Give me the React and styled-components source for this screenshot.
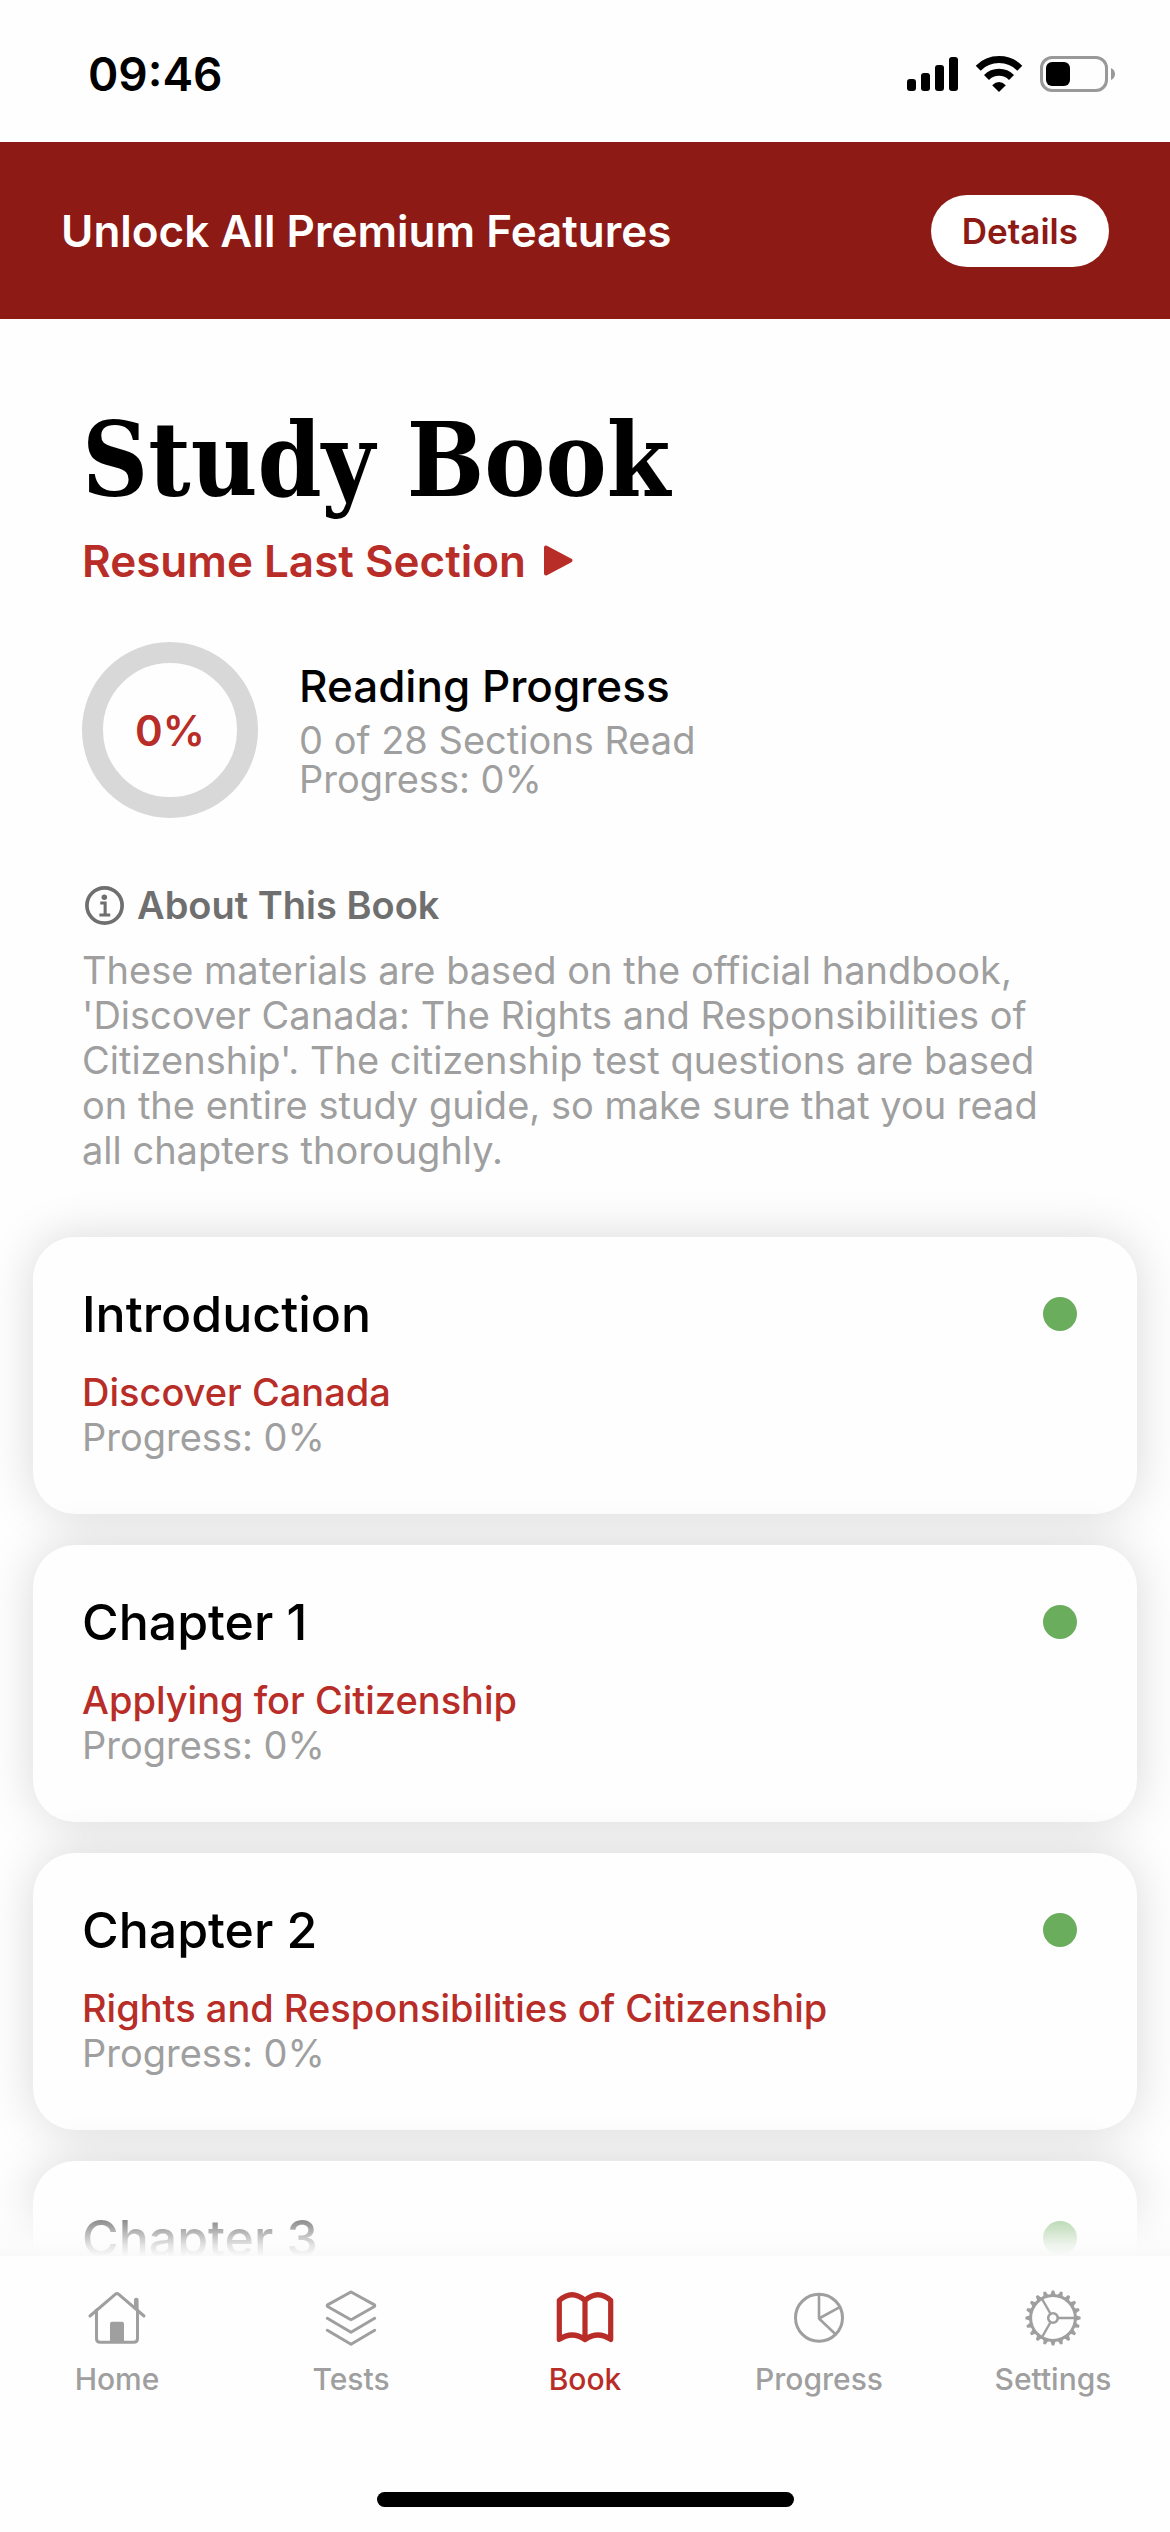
import React from "react";
import styled, { createGlobalStyle } from "styled-components";

const GlobalStyle = createGlobalStyle`
  * { box-sizing: border-box; }
  body {
    margin: 0;
    background: #fefefe;
    color: #000;
    font-family: Inter, Roboto, "Liberation Sans", sans-serif;
  }
  h1, h2, h3, p { margin: 0; }
  a { color: inherit; text-decoration: none; }
  svg { display: block; flex: none; overflow: visible; }
`;

const RED = "#b82d27";
const GREY = "#9f9f9f";

const Screen = styled.div`
  display: flex;
  flex-direction: column;
  height: 100vh;
  overflow: hidden;
`;

const StatusBar = styled.header`
  display: flex;
  flex: none;
  align-items: center;
  justify-content: space-between;
  height: 142px;
  padding: 6px 55px 0 88px;
`;

const Clock = styled.time`
  font-size: 46px;
  font-weight: 600;
`;

const StatusIcons = styled.div`
  display: flex;
  align-items: center;
  gap: 17px;
`;

const Banner = styled.section`
  display: flex;
  flex: none;
  align-items: center;
  justify-content: space-between;
  height: 177px;
  padding: 0 61px;
  background: #8d1a15;
  color: #fff;
`;

const BannerText = styled.p`
  font-size: 44px;
  font-weight: 600;
`;

const DetailsButton = styled.button`
  height: 72px;
  padding: 0 31px;
  border: 0;
  border-radius: 36px;
  background: #fff;
  color: #8d1a15;
  font: 600 35px Inter, Roboto, sans-serif;
`;

const Content = styled.main`
  position: relative;
  flex: 1;
  min-height: 0;
  overflow: hidden;
`;

const BottomFade = styled.div`
  position: absolute;
  right: 0;
  bottom: 0;
  left: 0;
  height: 72px;
  background: linear-gradient(
    rgba(254, 254, 254, 0),
    rgba(254, 254, 254, 0.55) 50%,
    rgba(252, 252, 252, 0.9) 85%,
    #f9f9f9
  );
`;

const Intro = styled.section`
  padding: 81px 82px 64px;
`;

const Title = styled.h1`
  font: bold 102px/120px "Roboto Slab", "DejaVu Serif Condensed", "DejaVu Serif", serif;
`;

const ResumeLink = styled.a`
  display: flex;
  align-items: center;
  gap: 17px;
  margin-top: 15px;
  color: ${RED};
  font-size: 44px;
  font-weight: 600;
  line-height: 52px;
`;

const Progress = styled.div`
  display: flex;
  align-items: center;
  gap: 41px;
  margin-top: 55px;
`;

const Ring = styled.div`
  display: grid;
  place-items: center;
  width: 176px;
  height: 176px;
  border: 21px solid #d8d8d8;
  border-radius: 50%;
  color: ${RED};
  font-size: 42px;
  font-weight: 600;
`;

const ProgressTitle = styled.h2`
  margin-bottom: 10px;
  font-size: 44px;
  font-weight: 500;
  line-height: 50px;
`;

const ProgressLine = styled.p`
  color: ${GREY};
  font-size: 38px;
  line-height: 39px;
`;

const AboutTitle = styled.h2`
  display: flex;
  align-items: center;
  gap: 12px;
  margin-top: 64px;
  color: #6f6f6f;
  font-size: 38px;
  font-weight: 600;
  line-height: 46px;
`;

const AboutText = styled.p`
  max-width: 980px;
  margin-top: 20px;
  color: ${GREY};
  font-size: 38px;
  line-height: 45px;
`;

const Chapters = styled.div`
  display: flex;
  flex-direction: column;
  gap: 31px;
  padding: 0 33px;
`;

const Card = styled.article`
  padding: 47px 60px 54px 49px;
  border-radius: 42px;
  background: #fefefe;
  box-shadow: 0 0 48px rgba(0, 0, 0, 0.15);
`;

const CardHead = styled.div`
  display: flex;
  align-items: center;
  justify-content: space-between;
  margin-bottom: 26px;
`;

const CardTitle = styled.h3`
  font-size: 50px;
  font-weight: 500;
  line-height: 60px;
`;

const Dot = styled.span`
  width: 34px;
  height: 34px;
  border-radius: 50%;
  background: #6aad5c;
`;

const CardLink = styled.a`
  display: block;
  color: ${RED};
  font-size: 38px;
  font-weight: 500;
  line-height: 45px;
`;

const CardProgress = styled.p`
  color: ${GREY};
  font-size: 38px;
  line-height: 45px;
`;

const Footer = styled.footer`
  display: flex;
  flex: none;
  flex-direction: column;
  align-items: center;
  justify-content: space-between;
  height: 276px;
  padding: 34px 0 25px;
  background: #fefefe;
`;

const Tabs = styled.nav`
  display: grid;
  grid-template-columns: repeat(5, 1fr);
  width: 100%;
`;

const Tab = styled.a`
  display: flex;
  flex-direction: column;
  align-items: center;
  gap: 15px;
  color: ${(p) => (p.$active ? RED : GREY)};
  font-size: 30px;
  font-weight: 500;
  line-height: 36px;
`;

const HomeIndicator = styled.div`
  width: 417px;
  height: 15px;
  border-radius: 8px;
  background: #000;
`;

const SignalIcon = () => (
  <svg width="51" height="34" aria-hidden="true">
    {[12, 18, 26, 34].map((h, i) => (
      <rect key={h} x={i * 14} y={34 - h} width="9" height={h} rx="3" />
    ))}
  </svg>
);

const WifiIcon = () => (
  <svg width="48" height="36" fill="none" stroke="#000" strokeWidth="7" aria-hidden="true">
    <path d="M3.2 12.2A29.5 29.5 0 0 1 44.8 12.2" />
    <path d="M11.5 21.5A17.5 17.5 0 0 1 36.5 21.5" />
    <path d="M24 36L17.2 29.2Q24 22.8 30.8 29.2Z" fill="#000" stroke="none" />
  </svg>
);

const BatteryIcon = () => (
  <svg width="75" height="36" aria-hidden="true">
    <rect x="1.5" y="1.5" width="65" height="33" rx="10.5" fill="none" stroke="#999" strokeWidth="3" />
    <rect x="6" y="6" width="24" height="24" rx="6" />
    <path d="M71 12Q75 14 75 18Q75 22 71 24Z" fill="#999" />
  </svg>
);

const PlayIcon = () => (
  <svg width="30" height="32" fill="currentColor" stroke="currentColor" strokeWidth="4" strokeLinejoin="round" aria-hidden="true">
    <path d="M3 2.5V28.5L27.5 15.5Z" />
  </svg>
);

const InfoIcon = () => (
  <svg width="43" height="39" viewBox="-3 0 42 38" fill="none" stroke="currentColor" strokeWidth="3.6" aria-hidden="true">
    <circle cx="19" cy="19" r="17.2" />
    <circle cx="18.8" cy="11" r="2.7" fill="currentColor" stroke="none" />
    <path d="M14.8 16.6H19.6V28M14 28.2H24.6" strokeWidth="3" />
  </svg>
);

const TabIcon = ({ width = 3, children }) => (
  <svg
    width="56"
    height="56"
    fill="none"
    stroke="currentColor"
    strokeWidth={width}
    strokeLinecap="round"
    strokeLinejoin="round"
    aria-hidden="true"
  >
    {children}
  </svg>
);

const HomeIcon = () => (
  <TabIcon>
    <path d="M1 26L26.5 4.2Q28 3 29.5 4.2L55 26" />
    <path d="M7.5 20V48.5Q7.5 52.3 11.3 52.3H44.7Q48.5 52.3 48.5 48.5V20" />
    <path d="M45 17V9.8Q45 7.8 47.2 7.8Q49.6 7.8 49.6 9.8V21Z" fill="currentColor" stroke="none" />
    <path d="M21 52V33.7Q21 31.7 23 31.7H33Q35 31.7 35 33.7V52Z" fill="currentColor" stroke="none" />
  </TabIcon>
);

const TestsIcon = () => (
  <TabIcon>
    <path d="M27 2.5Q28 1.8 29 2.5L51 14.6Q52.6 15.7 51 16.8L29 29.2Q28 30 27 29.2L5 16.8Q3.4 15.7 5 14.6Z" />
    <path d="M4.3 28.3L28 42.2L51.7 28.3M4.3 40.3L28 54.2L51.7 40.3" />
  </TabIcon>
);

const BookIcon = () => (
  <TabIcon width={5.2}>
    <path d="M28 10.5Q15 -1 2.3 10.5V49.5Q15 40.5 28 49.5Q41 40.5 53.7 49.5V10.5Q41 -1 28 10.5V49.5" />
  </TabIcon>
);

const ProgressIcon = () => (
  <TabIcon>
    <circle cx="28" cy="27.7" r="23.5" />
    <path d="M28 4.5V28.5L48.3 17.3M28 28.5L44.3 44" strokeWidth="2.6" />
  </TabIcon>
);

const SettingsIcon = () => (
  <TabIcon width={2.6}>
    <g transform="translate(28 28)">
      <circle r="22.4" strokeWidth="3" />
      <circle r="4.8" />
      {[0, 120, 240].map((a) => (
        <path key={a} d="M6 0H22" strokeWidth="2.3" transform={`rotate(${a})`} />
      ))}
      {Array.from({ length: 20 }, (_, i) => (
        <path key={i} d="M22.8 -2.7L27.6 -1.2V1.2L22.8 2.7Z" fill="currentColor" stroke="none" transform={`rotate(${i * 18})`} />
      ))}
    </g>
  </TabIcon>
);

const chapters = [
  { title: "Introduction", section: "Discover Canada" },
  { title: "Chapter 1", section: "Applying for Citizenship" },
  { title: "Chapter 2", section: "Rights and Responsibilities of Citizenship" },
  { title: "Chapter 3", section: "" },
];

const tabs = [
  { label: "Home", Icon: HomeIcon },
  { label: "Tests", Icon: TestsIcon },
  { label: "Book", Icon: BookIcon, active: true },
  { label: "Progress", Icon: ProgressIcon },
  { label: "Settings", Icon: SettingsIcon },
];

export default function App() {
  return (
    <Screen>
      <GlobalStyle />
      <StatusBar>
        <Clock>09:46</Clock>
        <StatusIcons>
          <SignalIcon />
          <WifiIcon />
          <BatteryIcon />
        </StatusIcons>
      </StatusBar>
      <Banner>
        <BannerText>Unlock All Premium Features</BannerText>
        <DetailsButton type="button">Details</DetailsButton>
      </Banner>
      <Content>
        <Intro>
          <Title>Study Book</Title>
          <ResumeLink href="#resume">
            Resume Last Section
            <PlayIcon />
          </ResumeLink>
          <Progress>
            <Ring>0%</Ring>
            <div>
              <ProgressTitle>Reading Progress</ProgressTitle>
              <ProgressLine>0 of 28 Sections Read</ProgressLine>
              <ProgressLine>Progress: 0%</ProgressLine>
            </div>
          </Progress>
          <AboutTitle>
            <InfoIcon />
            About This Book
          </AboutTitle>
          <AboutText>
            These materials are based on the official handbook, 'Discover Canada: The Rights and
            Responsibilities of Citizenship'. The citizenship test questions are based on the entire
            study guide, so make sure that you read all chapters thoroughly.
          </AboutText>
        </Intro>
        <Chapters>
          {chapters.map(({ title, section }) => (
            <Card key={title}>
              <CardHead>
                <CardTitle>{title}</CardTitle>
                <Dot />
              </CardHead>
              {section && (
                <>
                  <CardLink href="#section">{section}</CardLink>
                  <CardProgress>Progress: 0%</CardProgress>
                </>
              )}
            </Card>
          ))}
        </Chapters>
        <BottomFade />
      </Content>
      <Footer>
        <Tabs>
          {tabs.map(({ label, Icon, active }) => (
            <Tab key={label} href={`#${label.toLowerCase()}`} $active={active} aria-current={active ? "page" : undefined}>
              <Icon />
              {label}
            </Tab>
          ))}
        </Tabs>
        <HomeIndicator />
      </Footer>
    </Screen>
  );
}
